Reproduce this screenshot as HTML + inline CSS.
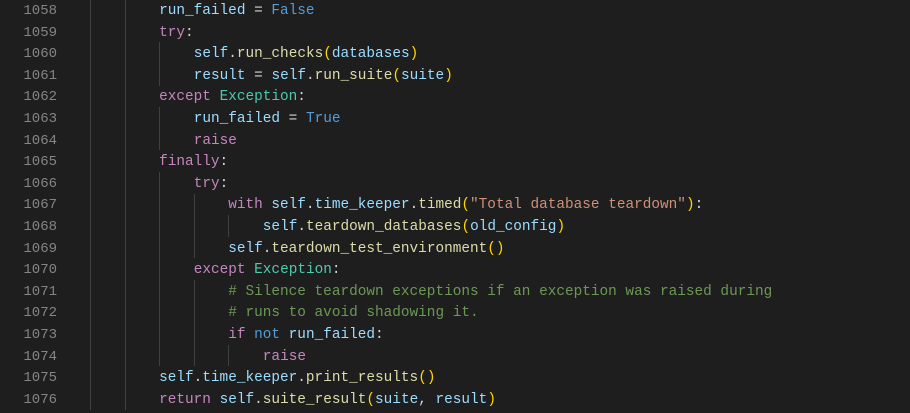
<!DOCTYPE html>
<html><head><style>
body{margin:0;width:910px;height:413px;background:#1e1e1e;overflow:hidden;position:relative;font-family:"Liberation Mono",monospace;font-size:14.4px;}
.ln{position:absolute;left:0;width:57px;text-align:right;color:#858585;height:21.6px;line-height:21.6px;font-size:14px;}
.c{position:absolute;left:90px;white-space:pre;color:#d4d4d4;height:21.6px;line-height:21.6px;}
.g{position:absolute;width:1px;background:#404040;height:21.6px;}
.v{color:#9cdcfe}.k{color:#c586c0}.b{color:#569cd6}.t{color:#4ec9b0}.f{color:#dcdcaa}.s{color:#ce9178}.m{color:#6a9955}.p{color:#ffd700}
</style></head><body>
<div id="r"></div>
<script>
var L=[
[8,'<span class="v">run_failed</span> = <span class="b">False</span>'],
[8,'<span class="k">try</span>:'],
[12,'<span class="v">self</span>.<span class="f">run_checks</span><span class="p">(</span><span class="v">databases</span><span class="p">)</span>'],
[12,'<span class="v">result</span> = <span class="v">self</span>.<span class="f">run_suite</span><span class="p">(</span><span class="v">suite</span><span class="p">)</span>'],
[8,'<span class="k">except</span> <span class="t">Exception</span>:'],
[12,'<span class="v">run_failed</span> = <span class="b">True</span>'],
[12,'<span class="k">raise</span>'],
[8,'<span class="k">finally</span>:'],
[12,'<span class="k">try</span>:'],
[16,'<span class="k">with</span> <span class="v">self</span>.<span class="v">time_keeper</span>.<span class="f">timed</span><span class="p">(</span><span class="s">"Total database teardown"</span><span class="p">)</span>:'],
[20,'<span class="v">self</span>.<span class="f">teardown_databases</span><span class="p">(</span><span class="v">old_config</span><span class="p">)</span>'],
[16,'<span class="v">self</span>.<span class="f">teardown_test_environment</span><span class="p">()</span>'],
[12,'<span class="k">except</span> <span class="t">Exception</span>:'],
[16,'<span class="m"># Silence teardown exceptions if an exception was raised during</span>'],
[16,'<span class="m"># runs to avoid shadowing it.</span>'],
[16,'<span class="k">if</span> <span class="b">not</span> <span class="v">run_failed</span>:'],
[20,'<span class="k">raise</span>'],
[8,'<span class="v">self</span>.<span class="v">time_keeper</span>.<span class="f">print_results</span><span class="p">()</span>'],
[8,'<span class="k">return</span> <span class="v">self</span>.<span class="f">suite_result</span><span class="p">(</span><span class="v">suite</span>, <span class="v">result</span><span class="p">)</span>']
];
var h='',cw=8.64;
L.forEach(function(l,i){
 var top=(1.0+i*21.6).toFixed(1);
 var gt=(-0.8+i*21.6).toFixed(1);
 h+='<div class="ln" style="top:'+top+'px">'+(1058+i)+'</div>';
 for(var c=0;c<l[0];c+=4){h+='<div class="g" style="top:'+gt+'px;left:'+Math.round(90+c*cw)+'px"></div>';}
 h+='<div class="c" style="top:'+top+'px;left:'+(90+l[0]*cw).toFixed(1)+'px">'+l[1]+'</div>';
});
document.getElementById('r').innerHTML=h;
</script>
</body></html>
